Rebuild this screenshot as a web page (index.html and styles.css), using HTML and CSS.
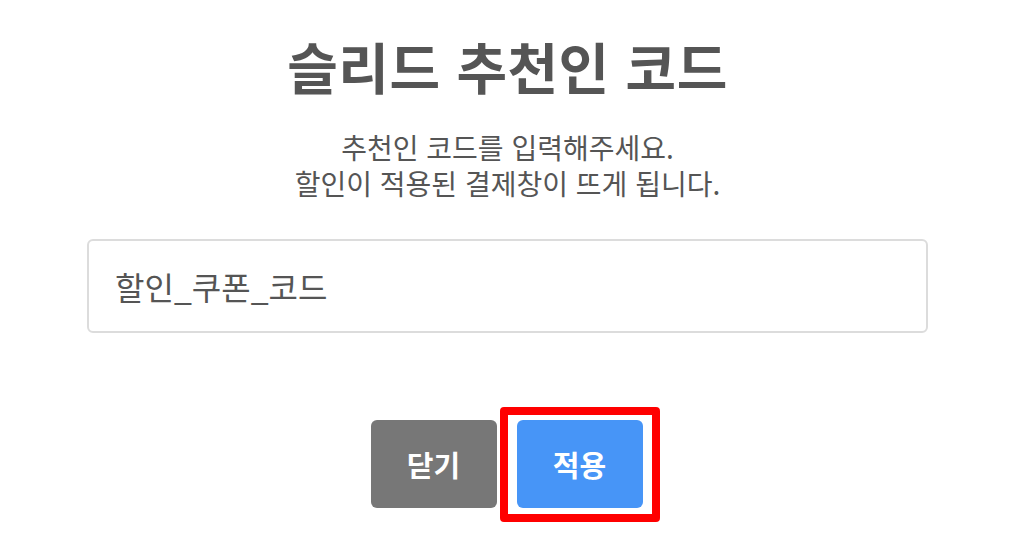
FILE: index.html
```html
<!DOCTYPE html>
<html lang="ko">
<head>
  <meta charset="UTF-8" />
  <meta name="viewport" content="width=device-width, initial-scale=1.0" />
  <title>슬리드 추천인 코드</title>
  <link rel="stylesheet" href="styles.css">
</head>
<body>
  <div class="modal">
    <h1 class="modal-title">슬리드 추천인 코드</h1>
    <p class="modal-desc">추천인 코드를 입력해주세요.<br>할인이 적용된 결제창이 뜨게 됩니다.</p>
    <input type="text" class="code-input" value="할인_쿠폰_코드" />
    <div class="actions">
      <button class="btn btn-close">닫기</button>
      <div class="highlight">
        <button class="btn btn-apply">적용</button>
      </div>
    </div>
  </div>
</body>
</html>
```

FILE: styles.css
```css
* {
  margin: 0;
  padding: 0;
  box-sizing: border-box;
}
body {
  font-family: "Noto Sans CJK KR", "Noto Sans", sans-serif;
  background: #fff;
  color: #555;
  min-height: 100vh;
}
.modal {
  display: flex;
  flex-direction: column;
  align-items: center;
  padding: 29px 85px 40px 87px;
}
.modal-title {
  font-size: 55px;
  line-height: 72px;
  letter-spacing: 0.5px;
  font-weight: 700;
  color: #555;
}
.modal-desc {
  margin-top: 28px;
  font-size: 28px;
  line-height: 36px;
  text-align: center;
  color: #555;
}
.code-input {
  margin-top: 38px;
  width: 100%;
  height: 94px;
  border: 2px solid #dcdcdc;
  border-radius: 6px;
  padding: 0 26px;
  font-family: inherit;
  font-size: 32px;
  color: #555;
  outline: none;
}
.actions {
  margin-top: 87px;
  margin-right: 2px;
  display: flex;
  align-items: center;
  gap: 20px;
}
.btn {
  width: 126px;
  height: 88px;
  border: none;
  border-radius: 6px;
  font-family: inherit;
  font-size: 29px;
  font-weight: 700;
  color: #fff;
  cursor: pointer;
}
.btn-close {
  background: #777;
}
.btn-apply {
  background: #4795f7;
}
.highlight {
  display: flex;
  margin: -13px -17px -14px;
  padding: 5px 9px 6px;
  border: 8px solid #f00;
  border-radius: 4px;
}
```
